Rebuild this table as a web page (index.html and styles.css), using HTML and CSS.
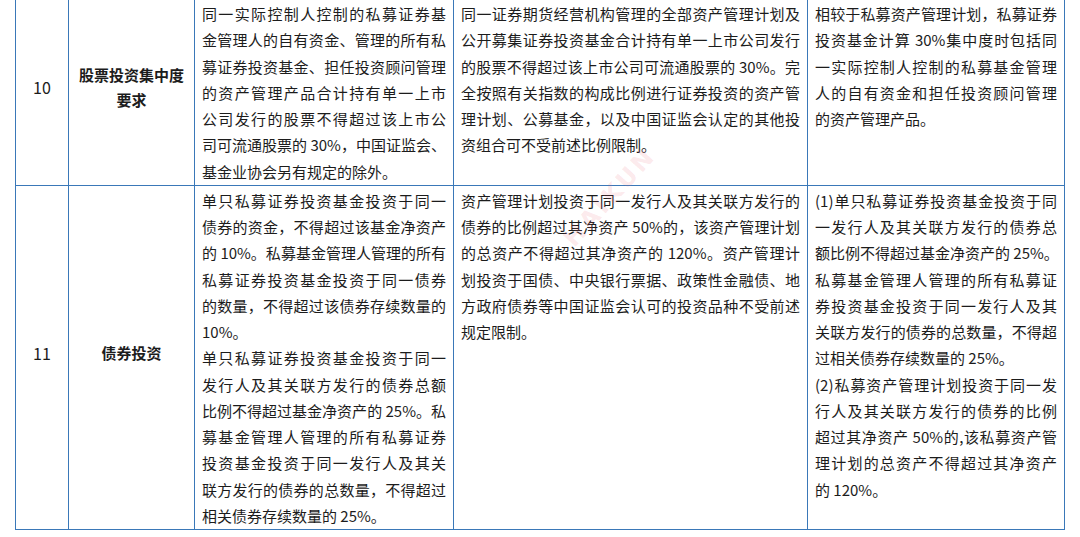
FILE: index.html
```html
<!DOCTYPE html>
<html lang="zh-CN">
<head>
<meta charset="utf-8">
<title>私募证券投资基金与资产管理计划对比</title>
<link rel="stylesheet" href="styles.css">
</head>
<body>
<div class="page">
  <table class="grid">
    <colgroup>
      <col class="c-no">
      <col class="c-title">
      <col class="c-a">
      <col class="c-b">
      <col class="c-c">
    </colgroup>
    <tbody>
      <tr>
        <td class="no">10</td>
        <td class="title"><span class="l">股票投资集中度</span><span class="l">要求</span></td>
        <td class="txt">
          <span class="l j">同一实际控制人控制的私募证券基</span>
          <span class="l j">金管理人的自有资金、管理的所有私</span>
          <span class="l j">募证券投资基金、担任投资顾问管理</span>
          <span class="l j">的资产管理产品合计持有单一上市</span>
          <span class="l j">公司发行的股票不得超过该上市公</span>
          <span class="l j">司可流通股票的 30%，中国证监会、</span>
          <span class="l">基金业协会另有规定的除外。</span>
        </td>
        <td class="txt">
          <span class="l j">同一证券期货经营机构管理的全部资产管理计划及</span>
          <span class="l j">公开募集证券投资基金合计持有单一上市公司发行</span>
          <span class="l j">的股票不得超过该上市公司可流通股票的 30%。完</span>
          <span class="l j">全按照有关指数的构成比例进行证券投资的资产管</span>
          <span class="l j">理计划、公募基金，以及中国证监会认定的其他投</span>
          <span class="l">资组合可不受前述比例限制。</span>
        </td>
        <td class="txt">
          <span class="l j">相较于私募资产管理计划，私募证券</span>
          <span class="l j">投资基金计算 30%集中度时包括同</span>
          <span class="l j">一实际控制人控制的私募基金管理</span>
          <span class="l j">人的自有资金和担任投资顾问管理</span>
          <span class="l">的资产管理产品。</span>
        </td>
      </tr>
      <tr>
        <td class="no">11</td>
        <td class="title"><span class="l">债券投资</span></td>
        <td class="txt">
          <span class="l j">单只私募证券投资基金投资于同一</span>
          <span class="l j">债券的资金，不得超过该基金净资产</span>
          <span class="l j">的 10%。私募基金管理人管理的所有</span>
          <span class="l j">私募证券投资基金投资于同一债券</span>
          <span class="l j">的数量，不得超过该债券存续数量的</span>
          <span class="l">10%。</span>
          <span class="l j">单只私募证券投资基金投资于同一</span>
          <span class="l j">发行人及其关联方发行的债券总额</span>
          <span class="l j">比例不得超过基金净资产的 25%。私</span>
          <span class="l j">募基金管理人管理的所有私募证券</span>
          <span class="l j">投资基金投资于同一发行人及其关</span>
          <span class="l j">联方发行的债券的总数量，不得超过</span>
          <span class="l">相关债券存续数量的 25%。</span>
        </td>
        <td class="txt">
          <span class="l j">资产管理计划投资于同一发行人及其关联方发行的</span>
          <span class="l j">债券的比例超过其净资产 50%的，该资产管理计划</span>
          <span class="l j">的总资产不得超过其净资产的 120%。资产管理计</span>
          <span class="l j">划投资于国债、中央银行票据、政策性金融债、地</span>
          <span class="l j">方政府债券等中国证监会认可的投资品种不受前述</span>
          <span class="l">规定限制。</span>
        </td>
        <td class="txt">
          <span class="l j">(1)单只私募证券投资基金投资于同</span>
          <span class="l j">一发行人及其关联方发行的债券总</span>
          <span class="l j">额比例不得超过基金净资产的 25%。</span>
          <span class="l j">私募基金管理人管理的所有私募证</span>
          <span class="l j">券投资基金投资于同一发行人及其</span>
          <span class="l j">关联方发行的债券的总数量，不得超</span>
          <span class="l">过相关债券存续数量的 25%。</span>
          <span class="l j">(2)私募资产管理计划投资于同一发</span>
          <span class="l j">行人及其关联方发行的债券的比例</span>
          <span class="l j">超过其净资产 50%的,该私募资产管</span>
          <span class="l j">理计划的总资产不得超过其净资产</span>
          <span class="l">的 120%。</span>
        </td>
      </tr>
    </tbody>
  </table>
  <div class="watermark">HAIKUN</div>
</div>
</body>
</html>
```
FILE: styles.css
```css
html, body {
  margin: 0;
  padding: 0;
  background: #ffffff;
}

.page {
  position: relative;
  width: 1080px;
  height: 537px;
  overflow: hidden;
  font-family: "Noto Sans CJK SC", "Noto Sans", sans-serif;
  color: #1c1c1c;
}

.grid {
  margin: -2px 0 0 15px;
  width: 1049px;
  border-collapse: collapse;
  table-layout: fixed;
  font-size: 15px;
}

.c-no { width: 53px; }
.c-title { width: 126px; }
.c-a { width: 259px; }
.c-b { width: 354px; }
.c-c { width: 257px; }

.grid td {
  border: 1px solid #3a78b8;
  padding: 2px 7px 0 7px;
  line-height: 26.25px;
}

.grid td.no {
  text-align: center;
  vertical-align: middle;
  font-size: 16px;
  padding: 0 4px 9px 4px;
}

.grid td.title {
  text-align: center;
  vertical-align: middle;
  font-weight: 700;
  padding: 0 4px 9px 4px;
}

.txt {
  vertical-align: top;
}

.l {
  display: block;
  white-space: nowrap;
}

.l.j {
  text-align: justify;
  text-align-last: justify;
}

.title .l {
  line-height: 25px;
}

.watermark {
  position: absolute;
  left: 548px;
  top: 183px;
  font-family: "DejaVu Sans", sans-serif;
  font-size: 24px;
  font-weight: 700;
  letter-spacing: 3px;
  color: rgba(236, 96, 118, 0.14);
  transform: rotate(-48deg);
  transform-origin: center;
  pointer-events: none;
}
```
